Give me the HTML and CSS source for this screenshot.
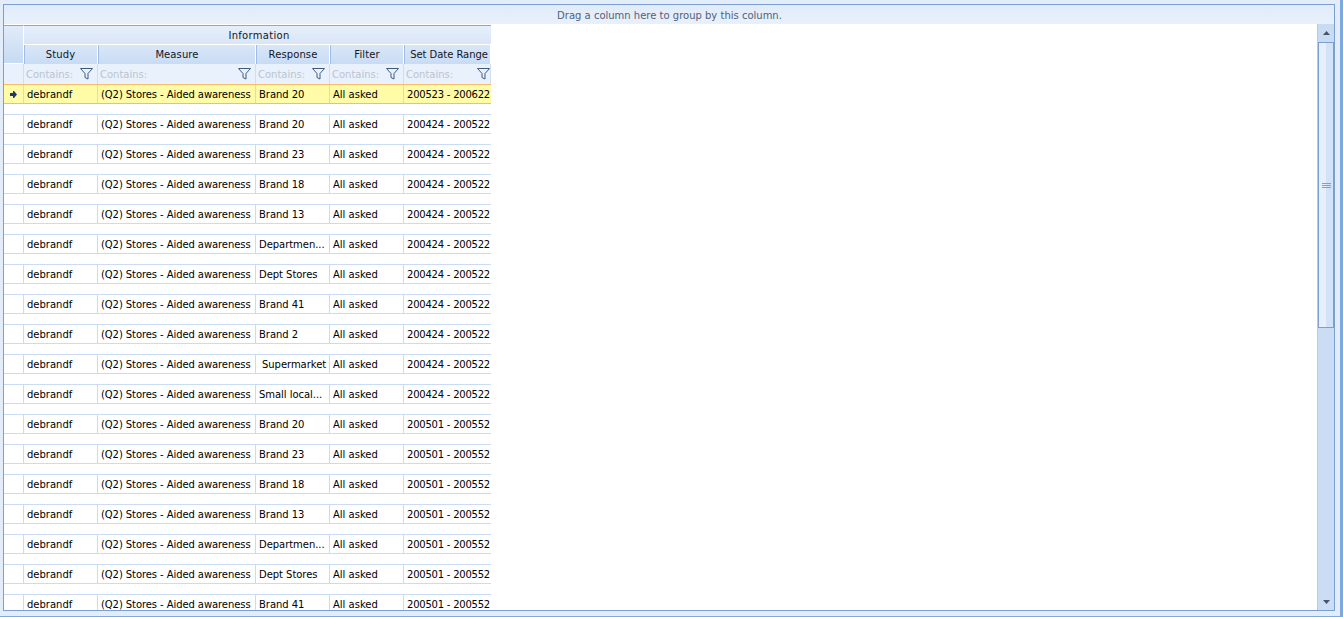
FILE: index.html
```html
<!DOCTYPE html>
<html>
<head>
<meta charset="utf-8">
<title>Grid</title>
<link rel="stylesheet" href="styles.css">
</head>
<body>
<div class="window">
  <div class="frame">
    <div class="group-panel">Drag a column here to group by this column.</div>
    <div class="content">
      <div class="grid">
        <div class="head-row">
          <div class="corner"></div>
          <div class="head-main">
            <div class="band">Information</div>
            <div class="cols">
              <div class="col c1">Study</div>
              <div class="col c2">Measure</div>
              <div class="col c3">Response</div>
              <div class="col c4">Filter</div>
              <div class="col c5">Set Date Range</div>
            </div>
          </div>
        </div>
        <div class="filter-row">
          <div class="ind"></div>
          <div class="fcell c1">Contains:<svg class="funnel" viewBox="0 0 13 12"><path d="M.5.5h12L8 5.500V11L5 9.500V5.500Z"/></svg></div>
          <div class="fcell c2">Contains:<svg class="funnel" viewBox="0 0 13 12"><path d="M.5.5h12L8 5.500V11L5 9.500V5.500Z"/></svg></div>
          <div class="fcell c3">Contains:<svg class="funnel" viewBox="0 0 13 12"><path d="M.5.5h12L8 5.500V11L5 9.500V5.500Z"/></svg></div>
          <div class="fcell c4">Contains:<svg class="funnel" viewBox="0 0 13 12"><path d="M.5.5h12L8 5.500V11L5 9.500V5.500Z"/></svg></div>
          <div class="fcell c5">Contains:<svg class="funnel" viewBox="0 0 13 12"><path d="M.5.5h12L8 5.500V11L5 9.500V5.500Z"/></svg></div>
        </div>
        <div class="rows">
          <div class="row active"><div class="ind"><svg class="arrow" viewBox="0 0 7 7"><path d="M3 0h1l3 3.500L4 7H3V5H0V2h3Z"/></svg></div><div class="cell c1">debrandf</div><div class="cell c2">(Q2) Stores - Aided awareness</div><div class="cell c3">Brand 20</div><div class="cell c4">All asked</div><div class="cell c5">200523 - 200622</div></div>
          <div class="row"><div class="ind"></div><div class="cell c1">debrandf</div><div class="cell c2">(Q2) Stores - Aided awareness</div><div class="cell c3">Brand 20</div><div class="cell c4">All asked</div><div class="cell c5">200424 - 200522</div></div>
          <div class="row"><div class="ind"></div><div class="cell c1">debrandf</div><div class="cell c2">(Q2) Stores - Aided awareness</div><div class="cell c3">Brand 23</div><div class="cell c4">All asked</div><div class="cell c5">200424 - 200522</div></div>
          <div class="row"><div class="ind"></div><div class="cell c1">debrandf</div><div class="cell c2">(Q2) Stores - Aided awareness</div><div class="cell c3">Brand 18</div><div class="cell c4">All asked</div><div class="cell c5">200424 - 200522</div></div>
          <div class="row"><div class="ind"></div><div class="cell c1">debrandf</div><div class="cell c2">(Q2) Stores - Aided awareness</div><div class="cell c3">Brand 13</div><div class="cell c4">All asked</div><div class="cell c5">200424 - 200522</div></div>
          <div class="row"><div class="ind"></div><div class="cell c1">debrandf</div><div class="cell c2">(Q2) Stores - Aided awareness</div><div class="cell c3">Departmen...</div><div class="cell c4">All asked</div><div class="cell c5">200424 - 200522</div></div>
          <div class="row"><div class="ind"></div><div class="cell c1">debrandf</div><div class="cell c2">(Q2) Stores - Aided awareness</div><div class="cell c3">Dept Stores</div><div class="cell c4">All asked</div><div class="cell c5">200424 - 200522</div></div>
          <div class="row"><div class="ind"></div><div class="cell c1">debrandf</div><div class="cell c2">(Q2) Stores - Aided awareness</div><div class="cell c3">Brand 41</div><div class="cell c4">All asked</div><div class="cell c5">200424 - 200522</div></div>
          <div class="row"><div class="ind"></div><div class="cell c1">debrandf</div><div class="cell c2">(Q2) Stores - Aided awareness</div><div class="cell c3">Brand 2</div><div class="cell c4">All asked</div><div class="cell c5">200424 - 200522</div></div>
          <div class="row"><div class="ind"></div><div class="cell c1">debrandf</div><div class="cell c2">(Q2) Stores - Aided awareness</div><div class="cell c3 lead">Supermarket</div><div class="cell c4">All asked</div><div class="cell c5">200424 - 200522</div></div>
          <div class="row"><div class="ind"></div><div class="cell c1">debrandf</div><div class="cell c2">(Q2) Stores - Aided awareness</div><div class="cell c3">Small local...</div><div class="cell c4">All asked</div><div class="cell c5">200424 - 200522</div></div>
          <div class="row"><div class="ind"></div><div class="cell c1">debrandf</div><div class="cell c2">(Q2) Stores - Aided awareness</div><div class="cell c3">Brand 20</div><div class="cell c4">All asked</div><div class="cell c5">200501 - 200552</div></div>
          <div class="row"><div class="ind"></div><div class="cell c1">debrandf</div><div class="cell c2">(Q2) Stores - Aided awareness</div><div class="cell c3">Brand 23</div><div class="cell c4">All asked</div><div class="cell c5">200501 - 200552</div></div>
          <div class="row"><div class="ind"></div><div class="cell c1">debrandf</div><div class="cell c2">(Q2) Stores - Aided awareness</div><div class="cell c3">Brand 18</div><div class="cell c4">All asked</div><div class="cell c5">200501 - 200552</div></div>
          <div class="row"><div class="ind"></div><div class="cell c1">debrandf</div><div class="cell c2">(Q2) Stores - Aided awareness</div><div class="cell c3">Brand 13</div><div class="cell c4">All asked</div><div class="cell c5">200501 - 200552</div></div>
          <div class="row"><div class="ind"></div><div class="cell c1">debrandf</div><div class="cell c2">(Q2) Stores - Aided awareness</div><div class="cell c3">Departmen...</div><div class="cell c4">All asked</div><div class="cell c5">200501 - 200552</div></div>
          <div class="row"><div class="ind"></div><div class="cell c1">debrandf</div><div class="cell c2">(Q2) Stores - Aided awareness</div><div class="cell c3">Dept Stores</div><div class="cell c4">All asked</div><div class="cell c5">200501 - 200552</div></div>
          <div class="row"><div class="ind"></div><div class="cell c1">debrandf</div><div class="cell c2">(Q2) Stores - Aided awareness</div><div class="cell c3">Brand 41</div><div class="cell c4">All asked</div><div class="cell c5">200501 - 200552</div></div>
        </div>
      </div>
      <div class="scrollbar">
        <div class="sb-btn"><svg class="sb-arrow" viewBox="0 0 7 4"><path d="M3.500 0L7 4H0Z"/></svg></div>
        <div class="sb-thumb"><div class="grip"></div></div>
        <div class="sb-track"><svg class="sb-arrow" viewBox="0 0 7 4"><path d="M0 0H7L3.500 4Z"/></svg></div>
      </div>
    </div>
  </div>
</div>
</body>
</html>
```
FILE: styles.css
```css
* { box-sizing: border-box; }
html, body { margin: 0; height: 100%; overflow: hidden; }
body {
  font-family: "DejaVu Sans", sans-serif;
  font-size: 10px;
  color: #000;
  background: #e3edf9;
}
.window {
  width: 1343px;
  height: 617px;
  padding: 4px 3px 0 3px;
  border-right: 3px solid #7fa8df;
  border-bottom: 1px solid #7fa8df;
}
.frame {
  width: 1332px;
  height: 607px;
  border: 1px solid #7b9fd0;
  display: flex;
  flex-direction: column;
  background: #fff;
}
.group-panel {
  height: 19px;
  flex: none;
  background: linear-gradient(#e1ebf9, #e8f0fb);
  color: #50617c;
  text-align: center;
  line-height: 22px;
  padding-left: 1px;
}
.content { flex: 1; display: flex; min-height: 0; }
.grid {
  width: 487px;
  flex: none;
  overflow: hidden;
  background: #fff;
}
.scrollbar {
  margin-left: auto;
  width: 17px;
  flex: none;
  display: flex;
  flex-direction: column;
  background: #cbddf4;
  border-left: 1px solid #b3cbe8;
}
.sb-btn {
  height: 18px;
  flex: none;
  display: flex;
  align-items: center;
  justify-content: center;
  background: #c7dbf3;
}
.sb-thumb {
  height: 286px;
  flex: none;
  border: 1px solid #7b9fd0;
  background: linear-gradient(90deg, #e6effb 0 50%, #d3e2f6 50%);
  display: flex;
  align-items: center;
  justify-content: center;
}
.grip {
  width: 9px;
  height: 5px;
  border-top: 1px solid #7ba1d6;
  border-bottom: 1px solid #7ba1d6;
  background: linear-gradient(#7ba1d6, #7ba1d6) center / 100% 1px no-repeat;
}
.sb-track {
  flex: 1;
  display: flex;
  align-items: flex-end;
  justify-content: center;
  padding-bottom: 6px;
}
.sb-arrow { width: 7px; height: 4px; fill: #46536b; display: block; }
.head-row {
  display: flex;
  height: 40px;
  padding-top: 1px;
  border-bottom: 1px solid #fff;
}
.corner {
  width: 20px;
  flex: none;
  background: linear-gradient(#e1ebf9, #c6daf3);
  border-right: 1px solid #fff;
  border-top: 1px solid #8fa7c8;
}
.head-main { flex: 1; display: flex; flex-direction: column; }
.band {
  height: 20px;
  flex: none;
  text-align: center;
  line-height: 20px;
  padding-left: 3px;
  border-top: 1px solid #8fa7c8;
  background: linear-gradient(#e6effb, #d9e6f8);
  border-bottom: 1px solid #fff;
  color: #11161f;
  letter-spacing: 0.3px;
}
.cols { display: flex; height: 19px; }
.col {
  flex: none;
  text-align: center;
  line-height: 20px;
  background: linear-gradient(#d9e6f8, #c9dcf4);
  border-right: 1px solid #fff;
  border-left: 1px solid #9fbce2;
  color: #11161f;
  white-space: nowrap;
  overflow: hidden;
  letter-spacing: 0.1px;
}
.col.c1 { padding-right: 1px; }
.col.c5 { padding-left: 3px; letter-spacing: -0.05px; }
.c1 { width: 74px; }
.c2 { width: 158px; }
.c3 { width: 74px; }
.c4 { width: 74px; }
.c5 { width: 87px; }
.filter-row {
  display: flex;
  height: 20px;
  background: #e8f1fc;
}
.filter-row .ind {
  background: #e8f1fc;
  border-right-color: #cfdff2;
}
.fcell {
  flex: none;
  display: flex;
  align-items: center;
  justify-content: space-between;
  padding: 0 4px 0 2px;
  color: #bcc4cf;
  border-right: 1px solid #cfdff2;
  white-space: nowrap;
}
.fcell.c5 { padding-right: 0; }
.funnel {
  width: 13px;
  height: 12px;
  fill: #e8f1fc;
  stroke: #3f5a80;
  stroke-width: 1;
  flex: none;
}
.row {
  display: flex;
  height: 20px;
  margin-bottom: 10px;
  border-top: 1px solid #c9dcf4;
  border-bottom: 1px solid #c9dcf4;
}
.row.active {
  background: #fffba6;
  border-top-color: #f7bb6b;
  border-bottom-color: #f7bb6b;
}
.ind {
  width: 20px;
  flex: none;
  border-right: 1px solid #c9dcf4;
  display: flex;
  align-items: center;
  justify-content: center;
}
.arrow { width: 7px; height: 7px; fill: #1f3a6e; }
.cell {
  flex: none;
  padding-left: 3px;
  line-height: 20px;
  white-space: nowrap;
  overflow: hidden;
  border-right: 1px solid #c9dcf4;
}
.cell.c2 { letter-spacing: -0.08px; }
.cell.c3 { letter-spacing: -0.04px; }
.cell.c5 { letter-spacing: -0.22px; border-right: none; }
.cell.lead { padding-left: 6px; }
```
